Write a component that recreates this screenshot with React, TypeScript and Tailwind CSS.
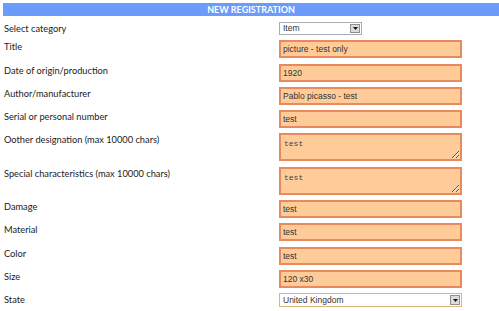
import React from 'react';

type Field = {
  label: string;
  kind: 'select' | 'input' | 'textarea' | 'state';
  value: string;
};

const fields: Field[] = [
  { label: 'Select category', kind: 'select', value: 'Item' },
  { label: 'Title', kind: 'input', value: 'picture - test only' },
  { label: 'Date of origin/production', kind: 'input', value: '1920' },
  { label: 'Author/manufacturer', kind: 'input', value: 'Pablo picasso - test' },
  { label: 'Serial or personal number', kind: 'input', value: 'test' },
  { label: 'Oother designation (max 10000 chars)', kind: 'textarea', value: 'test' },
  { label: 'Special characteristics (max 10000 chars)', kind: 'textarea', value: 'test' },
  { label: 'Damage', kind: 'input', value: 'test' },
  { label: 'Material', kind: 'input', value: 'test' },
  { label: 'Color', kind: 'input', value: 'test' },
  { label: 'Size', kind: 'input', value: '120 x30' },
  { label: 'State', kind: 'state', value: 'United Kingdom' },
];

function DropButton() {
  return (
    <div className="flex h-full w-[10px] items-center justify-center border border-[#8f8f8f] bg-[#dcdcdc]">
      <svg width="5" height="3" viewBox="0 0 5 3">
        <path d="M0 0 L5 0 L2.5 3 Z" fill="#111" />
      </svg>
    </div>
  );
}

function Control({ field }: { field: Field }) {
  const text = "font-['Liberation_Sans',Arial,sans-serif] text-[8.5px] text-[#333]";

  if (field.kind === 'select') {
    return (
      <div className="flex h-[13px] w-[83px] items-center border border-[#a5acb2] bg-white p-[1px] pl-[3px]">
        <span className={`flex-1 leading-none ${text}`}>{field.value}</span>
        <DropButton />
      </div>
    );
  }

  if (field.kind === 'state') {
    return (
      <div className="flex h-[14px] w-[183px] items-center border border-[#dcb87a] bg-white p-[1px] pl-[3px]">
        <span className={`flex-1 leading-none ${text}`}>{field.value}</span>
        <DropButton />
      </div>
    );
  }

  if (field.kind === 'textarea') {
    return (
      <textarea
        readOnly
        defaultValue={field.value}
        className="block h-[28px] w-[183px] border-2 border-[#e98a5c] bg-[#ffcc99] px-[3px] py-[4px] font-['Liberation_Mono','Courier_New',monospace] text-[8px] leading-[9px] text-[#444] outline-none"
      />
    );
  }

  return (
    <input
      readOnly
      defaultValue={field.value}
      className={`block h-[18px] w-[183px] border-2 border-[#e98a5c] bg-[#ffcc99] px-[2px] outline-none ${text}`}
    />
  );
}

export default function App() {
  return (
    <div className="h-[311px] w-[499px] overflow-hidden bg-white">
      <div className="ml-[3px] mt-[3px] flex h-[13px] items-center justify-center bg-[#6b9bfb]">
        <span className="font-['Lato',sans-serif] text-[9px] font-bold leading-none text-white">
          NEW REGISTRATION
        </span>
      </div>

      <div className="mt-[6px] flex flex-col gap-[5.3px]">
        {fields.map((f) => (
          <div key={f.label} className="flex items-start">
            <div className="w-[279px] pl-[4px] pt-[1px] font-['Lato',sans-serif] text-[9.25px] leading-[12px] text-[#222]">
              {f.label}
            </div>
            <Control field={f} />
          </div>
        ))}
      </div>
    </div>
  );
}
